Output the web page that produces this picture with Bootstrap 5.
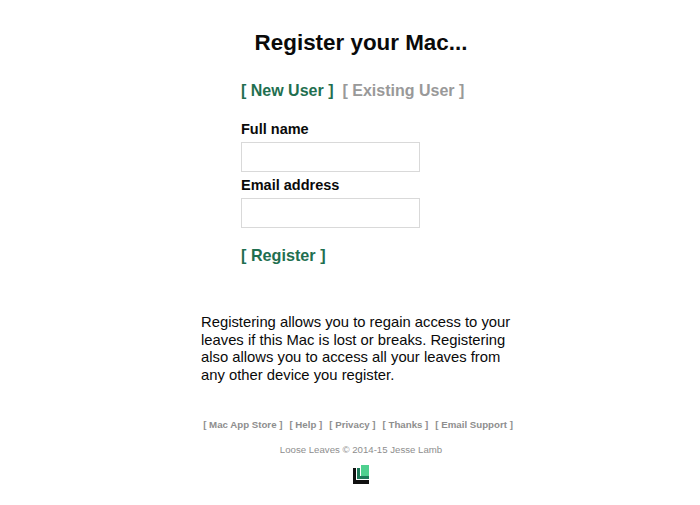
<!DOCTYPE html>
<html lang="en">
<head>
<meta charset="utf-8">
<title>Register your Mac</title>
<link rel="stylesheet" href="https://cdn.jsdelivr.net/npm/bootstrap@5.3.0/dist/css/bootstrap.min.css">
<style>
html,body{height:505px;overflow:hidden}
body{font-family:"Liberation Sans",Arial,sans-serif;background:#fff;color:#000}
.sheet{width:700px;padding-top:29px}
.headline{font-size:22.4px;line-height:28px;font-weight:700;text-align:center;margin:0 0 0 22px;color:#0a0a0a}
.formcol{margin-left:241px;width:260px;padding-top:24px}
.tabrow{gap:9px;font-size:16px;line-height:20px;font-weight:700;margin-bottom:20px}
.tab-on,.reg-link{color:#1f6f50;text-decoration:none}
.tab-off{color:#999;text-decoration:none}
.fieldlabel{display:block;font-size:14.5px;line-height:17px;font-weight:700;margin:0 0 4px;color:#0a0a0a}
.fieldbox{display:block;width:179px;height:30px;border:1px solid #d9d9d9;border-radius:0;background:#fff;padding:0 4px;margin-bottom:5px}
.reg-link{display:block;font-size:16.2px;line-height:20px;font-weight:700;margin-top:17px}
.blurb{margin:49px 0 0 201px;width:320px;font-size:14.8px;line-height:17.5px;color:#0a0a0a}
.footlinks{margin:34px 0 0 16px;gap:7px;font-size:9.7px;line-height:13px;font-weight:700;justify-content:center}
.footlinks a{color:#8e8e8e;text-decoration:none}
.credit{margin:12px 0 0 22px;text-align:center;font-size:9.65px;line-height:13px;color:#8e8e8e}
.logomark{display:block;margin:9px 0 0 352px}
</style>
</head>
<body>
<div class="sheet">
  <h1 class="headline">Register your Mac...</h1>
  <div class="formcol">
    <div class="d-flex tabrow">
      <a class="tab-on" href="#">[ New User ]</a>
      <a class="tab-off" href="#">[ Existing User ]</a>
    </div>
    <form>
      <label class="fieldlabel" for="fn">Full name</label>
      <input class="fieldbox" id="fn" type="text">
      <label class="fieldlabel" for="em">Email address</label>
      <input class="fieldbox" id="em" type="email">
      <a class="reg-link" href="#">[ Register ]</a>
    </form>
  </div>
  <p class="blurb">Registering allows you to regain access to your leaves if this Mac is lost or breaks. Registering also allows you to access all your leaves from any other device you register.</p>
  <div class="d-flex footlinks">
    <a href="#">[ Mac App Store ]</a><a href="#">[ Help ]</a><a href="#">[ Privacy ]</a><a href="#">[ Thanks ]</a><a href="#">[ Email Support ]</a>
  </div>
  <div class="credit">Loose Leaves © 2014-15 Jesse Lamb</div>
  <svg class="logomark" width="18" height="19" viewBox="0 0 18 19" aria-hidden="true">
    <rect x="1" y="3" width="16" height="16" fill="#111"/>
    <rect x="4" y="2" width="14" height="13" fill="#fff"/>
    <rect x="5" y="3" width="12" height="11" fill="#1f7a5a"/>
    <rect x="8" y="0" width="10" height="11" fill="#fff"/>
    <rect x="9" y="0" width="8" height="11" fill="#4fd08f"/>
  </svg>
</div>
</body>
</html>
